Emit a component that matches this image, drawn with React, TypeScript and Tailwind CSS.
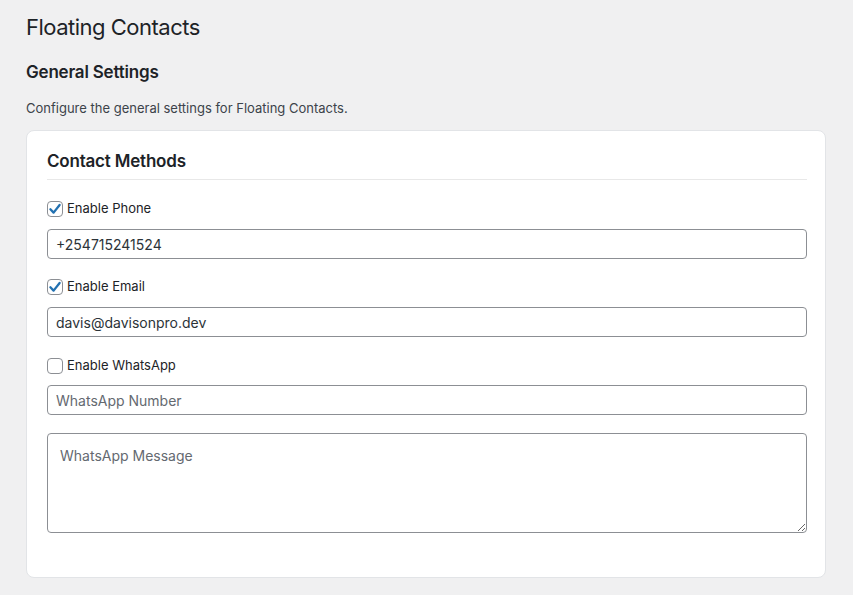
import React from "react";

const font = { fontFamily: "Inter, 'Noto Sans', 'Liberation Sans', sans-serif" };

function Check({ label, checked }: { label: string; checked?: boolean }) {
  return (
    <label className="flex items-center h-4 text-[13px] text-[#1d2327]">
      <span className="relative w-4 h-4 shrink-0 rounded-[4px] border border-[#8c8f94] bg-white">
        {checked && (
          <svg viewBox="0 0 16 16" className="absolute -left-px -top-px w-4 h-4">
            <path
              d="M3.4 8.3 L6.6 11.6 L12.6 4"
              fill="none"
              stroke="#2271b1"
              strokeWidth="2.3"
              strokeLinecap="round"
              strokeLinejoin="round"
            />
          </svg>
        )}
      </span>
      <span className="ml-1">{label}</span>
    </label>
  );
}

function Field({ value, placeholder }: { value?: string; placeholder?: string }) {
  return (
    <input
      type="text"
      defaultValue={value}
      placeholder={placeholder}
      className="block w-full h-[30px] px-2 rounded-[4px] border border-[#8c8f94] bg-white text-[14px] text-[#2c3338] placeholder:text-[#646970] outline-none"
      style={font}
    />
  );
}

export default function App() {
  return (
    <div className="min-h-screen bg-[#f0f0f1] text-[#1d2327] pl-[26px] pr-[27px] pt-[12px] pb-4" style={font}>
      <h1 className="text-[22px] leading-[30px] font-normal tracking-[-0.5px]">Floating Contacts</h1>
      <h2 className="mt-[20px] text-[17px] leading-[20px] font-semibold tracking-[-0.2px]">General Settings</h2>
      <p className="mt-[17px] text-[13px] leading-[18px] text-[#3c434a]">
        Configure the general settings for Floating Contacts.
      </p>

      {/* settings card */}
      <div className="mt-[13px] bg-white border border-[#e2e4e7] rounded-lg pl-5 pr-[18px] pt-5 pb-[44px]">
        <h3 className="text-[17px] leading-[20px] font-semibold tracking-[-0.2px] pb-[8px] border-b border-[#e8e8e8]">
          Contact Methods
        </h3>

        <div className="mt-[21px]">
          <Check label="Enable Phone" checked />
          <div className="mt-3">
            <Field value="+254715241524" />
          </div>
        </div>

        <div className="mt-[20px]">
          <Check label="Enable Email" checked />
          <div className="mt-3">
            <Field value="davis@davisonpro.dev" />
          </div>
        </div>

        <div className="mt-[21px]">
          <Check label="Enable WhatsApp" />
          <div className="mt-[11px]">
            <Field placeholder="WhatsApp Number" />
          </div>
        </div>

        <textarea
          placeholder="WhatsApp Message"
          className="mt-[18px] block w-full h-[100px] px-3 pt-[12px] rounded-[4px] border border-[#8c8f94] bg-white text-[14px] leading-[20px] text-[#2c3338] placeholder:text-[#646970] outline-none"
          style={font}
        />
      </div>
    </div>
  );
}
